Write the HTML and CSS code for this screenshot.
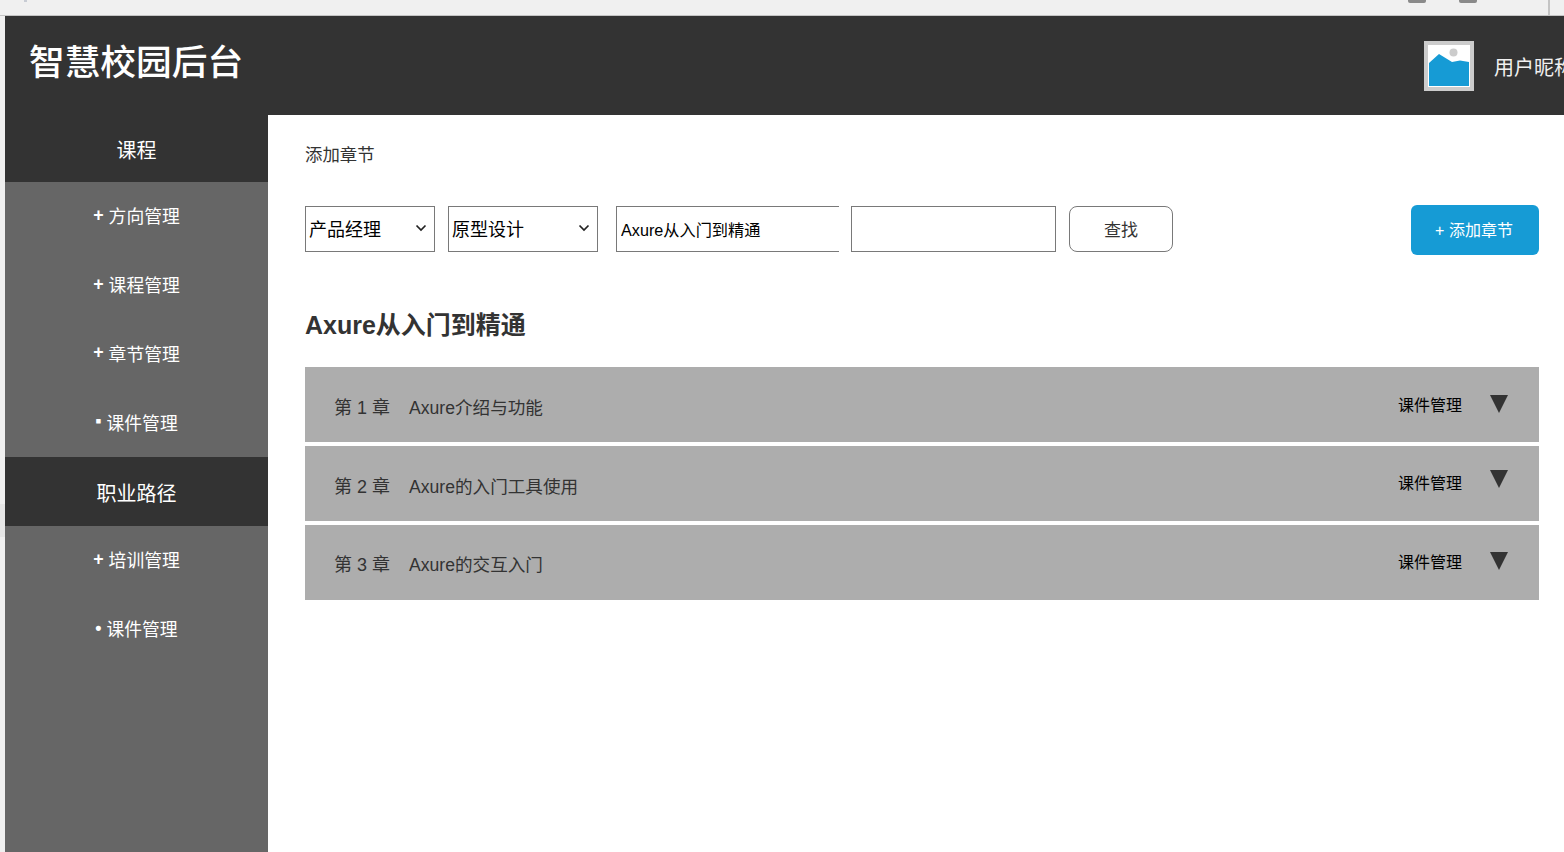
FILE: index.html
```html
<!DOCTYPE html>
<html lang="zh-CN">
<head>
<meta charset="utf-8">
<title>智慧校园后台</title>
<link rel="stylesheet" href="styles.css">
</head>
<body>
<div class="chrome">
  <span class="chrome-tick"></span>
  <span class="chrome-spacer"></span>
  <span class="chrome-btn"></span>
  <span class="chrome-btn"></span>
  <span class="chrome-divider"></span>
</div>
<span class="edge-mark"></span>
<div class="app">
  <header class="header">
    <div class="logo">智慧校园后台</div>
    <div class="user">
      <svg class="avatar" width="50" height="50" viewBox="0 0 50 50">
        <rect width="50" height="50" fill="#cccccc"/>
        <rect x="4" y="4" width="42" height="42" fill="#ffffff"/>
        <path d="M5 22 L15 13 L28 21 L36 19.5 L45 21 L45 45 L5 45 Z" fill="#169bd5"/>
        <circle cx="29.500" cy="11.500" r="4" fill="#cccccc"/>
      </svg>
      <span class="user-name">用户昵称</span>
    </div>
  </header>
  <div class="body">
    <nav class="sidebar">
      <div class="nav-title">课程</div>
      <div class="nav-group">
        <a class="nav-item"><b class="nav-mark">+</b>&nbsp;方向管理</a>
        <a class="nav-item"><b class="nav-mark">+</b>&nbsp;课程管理</a>
        <a class="nav-item"><b class="nav-mark">+</b>&nbsp;章节管理</a>
        <a class="nav-item"><b class="nav-mark">▪</b>&nbsp;课件管理</a>
      </div>
      <div class="nav-title nav-title-alt">职业路径</div>
      <div class="nav-group">
        <a class="nav-item"><b class="nav-mark">+</b>&nbsp;培训管理</a>
        <a class="nav-item"><b class="nav-mark">•</b>&nbsp;课件管理</a>
      </div>
    </nav>
    <main class="main">
      <div class="crumb">添加章节</div>
      <div class="toolbar">
        <select class="select select-a"><option>产品经理</option></select>
        <select class="select select-b"><option>原型设计</option></select>
        <input class="input input-course" type="text" value="Axure从入门到精通">
        <input class="input input-search" type="text">
        <button class="btn-search">查找</button>
        <button class="btn-add">+ 添加章节</button>
      </div>
      <h1 class="course-title">Axure从入门到精通</h1>
      <div class="chapters">
        <div class="chapter">
          <span class="chapter-name"><span class="chapter-no">第 1 章</span><span class="chapter-text">Axure介绍与功能</span></span>
          <span class="chapter-link">课件管理</span>
          <span class="arrow"></span>
        </div>
        <div class="chapter chapter-2">
          <span class="chapter-name"><span class="chapter-no">第 2 章</span><span class="chapter-text">Axure的入门工具使用</span></span>
          <span class="chapter-link">课件管理</span>
          <span class="arrow"></span>
        </div>
        <div class="chapter chapter-3">
          <span class="chapter-name"><span class="chapter-no">第 3 章</span><span class="chapter-text">Axure的交互入门</span></span>
          <span class="chapter-link">课件管理</span>
          <span class="arrow"></span>
        </div>
      </div>
    </main>
  </div>
</div>
</body>
</html>
```

FILE: styles.css
```css
* { box-sizing: border-box; }
html, body { margin: 0; height: 100%; }
body {
  width: 1564px;
  height: 852px;
  overflow: hidden;
  background: #f0f0f0;
  font-family: "Liberation Sans", "Noto Sans CJK SC", sans-serif;
  display: flex;
  flex-direction: column;
}
.chrome {
  height: 16px;
  flex: none;
  display: flex;
  border-bottom: 1px solid #c4c4c4;
  background: #f0f0f0;
}
.chrome-tick {
  width: 3px;
  height: 2px;
  margin-left: 24px;
  background: #c8ccd4;
}
.chrome-spacer { flex: 1; }
.chrome-btn {
  width: 18px;
  height: 3px;
  margin-right: 33px;
  background: #8a8a8a;
  border-radius: 0 0 2px 2px;
}
.chrome-divider {
  width: 2px;
  height: 15px;
  margin-left: 38px;
  margin-right: 14px;
  background: #c4c4c4;
}
.edge-mark {
  position: absolute;
  left: 0;
  top: 504px;
  width: 5px;
  height: 33px;
  background: #e6e6e6;
}
.app {
  flex: 1;
  margin-left: 5px;
  display: flex;
  flex-direction: column;
  min-height: 0;
}
.header {
  height: 99px;
  flex: none;
  background: #333333;
  display: flex;
  justify-content: space-between;
  color: #ffffff;
  overflow: hidden;
}
.logo {
  font-size: 35.700px;
  font-weight: 500;
  line-height: 50px;
  margin: 22px 0 0 24px;
}
.user {
  display: flex;
  align-items: flex-start;
  width: 140px;
  flex: none;
  padding-top: 25px;
  white-space: nowrap;
}
.avatar { flex: none; }
.user-name {
  font-size: 20px;
  line-height: 30px;
  margin: 12px 0 0 20px;
  color: #f0f0f0;
}
.body {
  flex: 1;
  display: flex;
  min-height: 0;
}
.sidebar {
  width: 263px;
  flex: none;
  background: #666666;
  color: #ffffff;
}
.nav-title {
  height: 67px;
  padding-top: 2px;
  background: #333333;
  display: flex;
  align-items: center;
  justify-content: center;
  font-size: 20px;
}
.nav-title-alt { height: 69px; }
.nav-group { display: flex; flex-direction: column; }
.nav-item {
  height: 68.750px;
  padding-bottom: 2px;
  display: flex;
  align-items: center;
  justify-content: center;
  font-size: 17.800px;
}
.nav-mark { font-weight: 700; }
.main {
  flex: 1;
  background: #ffffff;
  padding: 0 25px 0 37px;
  color: #333333;
}
.crumb {
  font-size: 17.400px;
  line-height: 24px;
  padding-top: 28px;
  height: 90px;
}
.toolbar {
  display: flex;
  align-items: flex-start;
  height: 50px;
}
.select {
  appearance: none;
  height: 46px;
  margin-top: 1px;
  padding: 2px 0 0 3px;
  border: 1px solid #797979;
  border-radius: 0;
  background-color: #ffffff;
  background-image: url("data:image/svg+xml,%3Csvg xmlns='http://www.w3.org/2000/svg' width='12' height='8' viewBox='0 0 12 8'%3E%3Cpath d='M1.500 1.500 L6 6 L10.500 1.500' fill='none' stroke='%23222222' stroke-width='1.700'/%3E%3C/svg%3E");
  background-repeat: no-repeat;
  color: #000000;
  font: 18px "Liberation Sans", "Noto Sans CJK SC", sans-serif;
}
.select-a {
  width: 130px;
  margin-right: 13px;
  background-position: 109px 17px;
}
.select-b {
  width: 150px;
  margin-right: 18px;
  background-position: 129px 17px;
}
.input {
  height: 46px;
  margin-top: 1px;
  border: 1px solid #797979;
  background: #ffffff;
  color: #000000;
  padding: 0 4px;
  outline: none;
  font: 16.200px "Liberation Sans", "Noto Sans CJK SC", sans-serif;
}
.input-course { width: 223px; border-right: 0; margin-right: 12px; }
.input-search { width: 205px; margin-right: 13px; }
.btn-search {
  width: 104px;
  height: 46px;
  margin-top: 1px;
  padding: 0 0 2px;
  border: 1px solid #797979;
  border-radius: 8px;
  background: #ffffff;
  color: #333333;
  font: 17px "Liberation Sans", "Noto Sans CJK SC", sans-serif;
}
.btn-add {
  width: 128px;
  height: 50px;
  margin-left: auto;
  padding: 0 2px 2px 0;
  border: 0;
  border-radius: 6px;
  background: #169bd5;
  color: #ffffff;
  font: 16px "Liberation Sans", "Noto Sans CJK SC", sans-serif;
}
.course-title {
  margin: 0;
  padding-top: 51px;
  height: 112px;
  font-size: 25px;
  line-height: 38px;
  font-weight: 700;
  color: #333333;
}
.chapters { display: flex; flex-direction: column; gap: 4px; }
.chapter {
  height: 75px;
  background: #adadad;
  display: flex;
  padding: 0 31px 0 29px;
}
.chapter-name {
  flex: 1;
  display: flex;
  line-height: 26px;
  padding-top: 28px;
  color: #333333;
}
.chapter-no { width: 75px; font-size: 18px; }
.chapter-text { font-size: 17.600px; }
.chapter-link {
  font-size: 16px;
  line-height: 24px;
  padding-top: 27px;
  color: #000000;
}
.arrow {
  width: 0;
  height: 0;
  margin: 28px 0 0 28px;
  border-left: 9.500px solid transparent;
  border-right: 9.500px solid transparent;
  border-top: 18px solid #333333;
}
.chapter-2 .arrow { margin-top: 24px; }
.chapter-2 .chapter-link { padding-top: 26px; }
.chapter-3 .arrow { margin-top: 27px; }
.chapter-3 .chapter-link { padding-top: 26px; }
.chapter-3 .chapter-name { padding-top: 27px; }
```
